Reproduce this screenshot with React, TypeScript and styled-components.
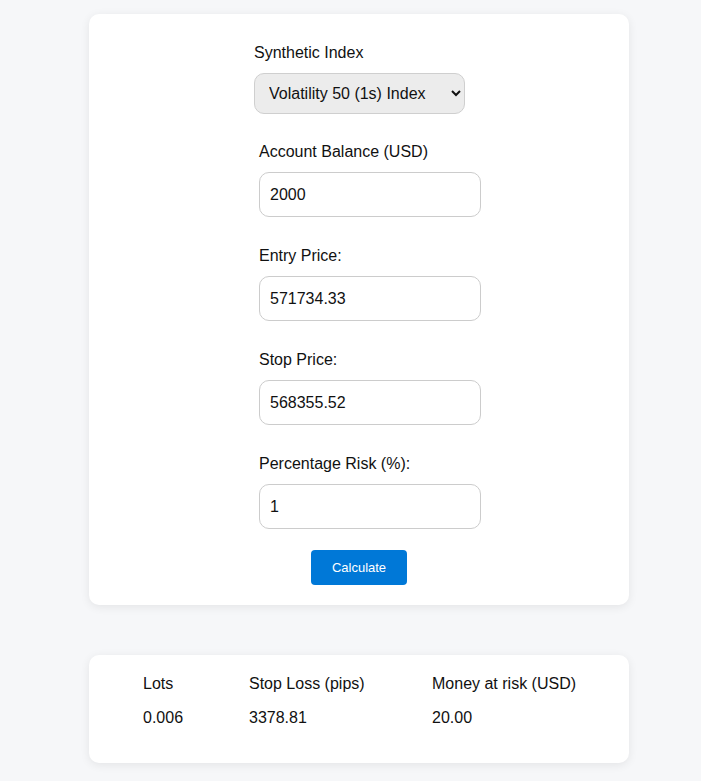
import React, { useState } from "react";
import styled, { createGlobalStyle } from "styled-components";

const GlobalStyle = createGlobalStyle`
  body {
    margin: 0;
    background: #f6f7f9;
    font-family: "Liberation Sans", Arial, sans-serif;
    color: #111;
  }
`;

const INDICES = [
  "Volatility 10 Index",
  "Volatility 25 Index",
  "Volatility 50 (1s) Index",
  "Volatility 75 Index",
  "Volatility 100 Index",
];

const App = () => {
  const [index, setIndex] = useState("Volatility 50 (1s) Index");
  const [balance, setBalance] = useState("2000");
  const [entry, setEntry] = useState("571734.33");
  const [stop, setStop] = useState("568355.52");
  const [risk, setRisk] = useState("1");

  // 결과 계산
  const pips = Math.abs(Number(entry) - Number(stop));
  const money = (Number(balance) * Number(risk)) / 100;
  const lots = pips ? money / pips : 0;

  return (
    <Page>
      <GlobalStyle />
      <Card>
        <FieldColumn>
          <Label>Synthetic Index</Label>
          <Select value={index} onChange={(e) => setIndex(e.target.value)}>
            {INDICES.map((name) => (
              <option key={name}>{name}</option>
            ))}
          </Select>
          <Field $top={29}>
            <Label>Account Balance (USD)</Label>
            <Input value={balance} onChange={(e) => setBalance(e.target.value)} />
          </Field>
          <Field $top={30}>
            <Label>Entry Price:</Label>
            <Input value={entry} onChange={(e) => setEntry(e.target.value)} />
          </Field>
          <Field $top={30}>
            <Label>Stop Price:</Label>
            <Input value={stop} onChange={(e) => setStop(e.target.value)} />
          </Field>
          <Field $top={30}>
            <Label>Percentage Risk (%):</Label>
            <Input value={risk} onChange={(e) => setRisk(e.target.value)} />
          </Field>
        </FieldColumn>
        <ButtonRow>
          <Button>Calculate</Button>
        </ButtonRow>
      </Card>
      <ResultCard>
        <ResultGrid>
          <Cell>Lots</Cell>
          <Cell>Stop Loss (pips)</Cell>
          <Cell>Money at risk (USD)</Cell>
          <Cell>{lots.toFixed(3)}</Cell>
          <Cell>{pips.toFixed(2)}</Cell>
          <Cell>{money.toFixed(2)}</Cell>
        </ResultGrid>
      </ResultCard>
    </Page>
  );
};

const Page = styled.div`
  display: flex;
  flex-direction: column;
  gap: 50px;
  padding: 14px 0 18px 89px;
`;

const Card = styled.div`
  width: 540px;
  box-sizing: border-box;
  background: #fff;
  border-radius: 10px;
  box-shadow: 0 2px 10px rgba(0, 0, 0, 0.08);
  padding: 30px 0 20px;
`;

const FieldColumn = styled.div`
  display: flex;
  flex-direction: column;
  align-items: flex-start;
  padding-left: 165px;
`;

const Label = styled.label`
  display: block;
  font-size: 16px;
  line-height: 18px;
  margin-bottom: 11px;
`;

const Select = styled.select`
  width: 211px;
  height: 41px;
  box-sizing: border-box;
  padding: 0 10px;
  font-family: "Liberation Sans", Arial, sans-serif;
  font-size: 16px;
  color: #111;
  background: #ececec;
  border: 1px solid #cfcfcf;
  border-radius: 10px;
`;

const Field = styled.div<{ $top: number }>`
  display: flex;
  flex-direction: column;
  margin: ${({ $top }) => $top}px 0 0 5px;
`;

const Input = styled.input`
  width: 222px;
  height: 45px;
  box-sizing: border-box;
  padding: 0 10px;
  font-family: "Liberation Sans", Arial, sans-serif;
  font-size: 16px;
  color: #111;
  background: #fff;
  border: 1px solid #cccccc;
  border-radius: 10px;
`;

const ButtonRow = styled.div`
  display: flex;
  justify-content: center;
  margin-top: 21px;
`;

const Button = styled.button`
  width: 96px;
  height: 35px;
  border: none;
  border-radius: 4px;
  background: #0078d7;
  color: #fff;
  font-family: "Liberation Sans", Arial, sans-serif;
  font-size: 13px;
  cursor: pointer;
`;

const ResultCard = styled(Card)`
  padding: 20px 0 36px 54px;
`;

const ResultGrid = styled.div`
  display: grid;
  grid-template-columns: 106px 183px auto;
  row-gap: 16px;
`;

const Cell = styled.div`
  font-size: 16px;
  line-height: 18px;
`;

export default App;
